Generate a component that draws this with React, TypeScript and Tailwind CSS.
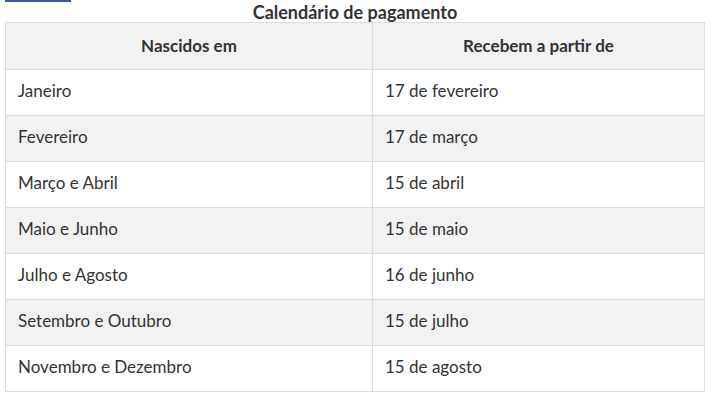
const rows = [
  ["Janeiro", "17 de fevereiro"],
  ["Fevereiro", "17 de março"],
  ["Março e Abril", "15 de abril"],
  ["Maio e Junho", "15 de maio"],
  ["Julho e Agosto", "16 de junho"],
  ["Setembro e Outubro", "15 de julho"],
  ["Novembro e Dezembro", "15 de agosto"],
];

export default function App() {
  return (
    <div className="w-[719px] h-[402px] bg-white text-[#333] font-['Lato',sans-serif] relative overflow-hidden">
      <div className="absolute left-[5px] top-0 w-[66px] h-[2px] bg-[#3b5998]" />
      <div className="pl-[5px] pt-[2px]">
        <h2 className="w-[700px] text-center text-[18px] font-bold leading-[20px]">
          Calendário de pagamento
        </h2>
        <table className="w-[700px] border-collapse border border-[#dcdcdc] text-[17px] table-fixed">
          <thead>
            <tr className="bg-[#f2f2f2] h-[47px]">
              <th className="w-[367px] border border-[#dcdcdc] font-bold">Nascidos em</th>
              <th className="border border-[#dcdcdc] font-bold">Recebem a partir de</th>
            </tr>
          </thead>
          <tbody>
            {rows.map(([a, b], i) => (
              <tr key={a} className={`h-[46px] ${i % 2 === 1 ? "bg-[#f2f2f2]" : "bg-white"}`}>
                <td className="border border-[#dcdcdc] pl-[12px] pb-[3px]">{a}</td>
                <td className="border border-[#dcdcdc] pl-[12px] pb-[3px]">{b}</td>
              </tr>
            ))}
          </tbody>
        </table>
      </div>
    </div>
  );
}
